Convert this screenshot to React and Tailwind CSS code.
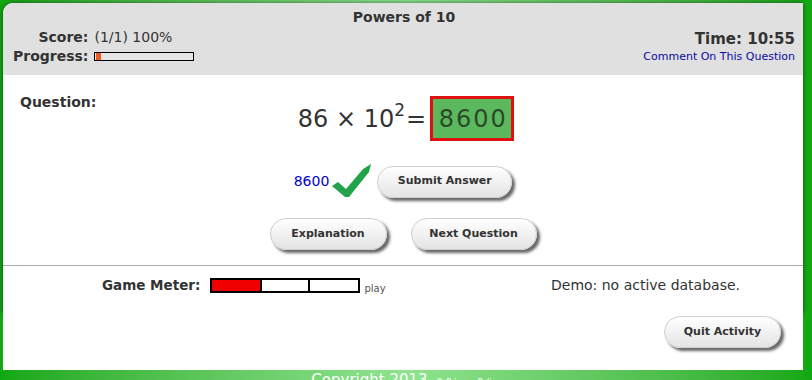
import React from 'react';

const font = { fontFamily: '"DejaVu Sans", Verdana, sans-serif' };

const PillButton = ({ children, width }) => (
  <button
    className={`h-[32px] ${width} rounded-full border border-[#cfcfcf] bg-gradient-to-b from-white to-[#e4e4e4] text-[11px] font-bold text-[#333] shadow-[3px_3px_3px_rgba(0,0,0,0.6)]`}
  >
    {children}
  </button>
);

const Check = () => (
  <svg width="40" height="34" viewBox="0 0 40 34" className="block">
    <polygon points="0,22 6,18 14,25 31,5 39,0 37,8 17,33 13,33" fill="#22a24a" />
  </svg>
);

export default function App() {
  return (
    <div
      className="h-[380px] w-[812px] overflow-hidden bg-gradient-to-r from-[#10a810] via-[#8fe48f] to-[#10a810] pt-[3px] text-[#333]"
      style={font}
    >
      <div className="ml-[3px] w-[800px]">
        {/* main card */}
        <div className="overflow-hidden rounded-tl-[10px] bg-white shadow-[0_0_5px_rgba(0,0,0,0.55)]">
          {/* header */}
          <div className="h-[72px] bg-[#e0e0e0] px-[10px] pt-[6px] pr-[8px]">
            <div className="text-center text-[14px] font-bold leading-[16px]">Powers of 10</div>
            <div className="mt-[3px] flex justify-between">
              <div className="grid grid-cols-[auto_auto] items-center gap-x-[6px] text-[14px] leading-[19px]">
                <span className="text-right font-bold">Score:</span>
                <span>(1/1) 100%</span>
                <span className="text-right font-bold">Progress:</span>
                <div className="h-[9px] w-[100px] border border-black bg-[#e6e6e6]">
                  <div className="ml-[1px] h-full w-[5px] bg-[#ee5a24]" />
                </div>
              </div>
              <div className="pt-[2px] text-right">
                <div className="text-[15px] font-bold leading-[18px]">Time: 10:55</div>
                <div className="text-[11px] leading-[18px] text-[#0a0aa0]">Comment On This Question</div>
              </div>
            </div>
          </div>

          {/* question */}
          <div className="grid h-[190px] grid-cols-[1fr_auto_1fr]">
            <div className="pl-[17px] pt-[17px] text-[14px] font-bold">Question:</div>
            <div className="flex flex-col items-center pt-[21px]">
              <div className="ml-[6px] flex items-center text-[24px] leading-none">
                <span>86 × 10</span>
                <sup className="relative -top-[9px] text-[17px]">2</sup>
                <span className="ml-[1px] mr-[4px]">=</span>
                <div className="flex h-[45px] w-[84px] items-center justify-center border-[3px] border-[#e01010] bg-[#5cb85c] pl-[2px] tracking-[2px] text-[#2a4a2a]">
                  8600
                </div>
              </div>
              <div className="mt-[24px] flex items-center">
                <span className="text-[14px] text-[#0000cc]">8600</span>
                <div className="ml-[3px] mr-[5px] -mt-[1px]">
                  <Check />
                </div>
                <PillButton width="w-[135px]">Submit Answer</PillButton>
              </div>
              <div className="mt-[20px] flex items-center gap-[24px]">
                <PillButton width="w-[117px]">Explanation</PillButton>
                <PillButton width="w-[126px]">Next Question</PillButton>
              </div>
            </div>
            <div />
          </div>

          {/* game meter */}
          <div className="flex h-[48px] items-start border-t border-[#aaa] pl-[99px] pr-[63px] pt-[9px]">
            <div className="flex h-[20px] items-center">
              <span className="text-[13.5px] font-bold">Game Meter:</span>
              <div className="ml-[10px] flex h-[15px] w-[150px] border-2 border-black">
                <div className="w-[48px] bg-[#f00000]" />
                <div className="w-[50px] border-l-2 border-r-2 border-black bg-white" />
                <div className="flex-1 bg-white" />
              </div>
              <span className="ml-[4px] mt-[6px] text-[10px] text-[#555]">play</span>
            </div>
            <div className="ml-auto flex h-[20px] items-center text-[14px]">Demo: no active database.</div>
          </div>
        </div>

        {/* quit area */}
        <div className="flex h-[57px] justify-end bg-white pr-[22px] pt-[3px]">
          <PillButton width="w-[117px]">Quit Activity</PillButton>
        </div>
      </div>

      {/* footer */}
      <div className="flex items-baseline justify-center gap-[8px] pt-[1px] text-white">
        <span className="text-[15px] leading-[18px]">Copyright 2013</span>
        <span className="text-[8px]">© Privacy Policy</span>
      </div>
    </div>
  );
}
